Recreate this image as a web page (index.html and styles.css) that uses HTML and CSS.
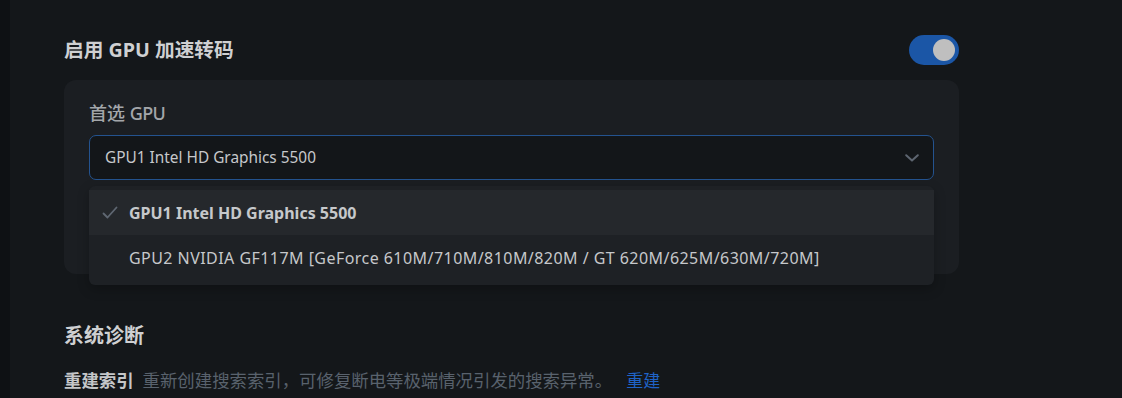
FILE: index.html
```html
<!DOCTYPE html>
<html lang="zh-CN">
<head>
<meta charset="utf-8">
<link rel="stylesheet" href="styles.css">
</head>
<body>
<div class="layout">
  <div class="rail"></div>
  <main class="main">
    <div class="setting-head">
      <h2 class="title">启用 GPU 加速转码</h2>
      <div class="toggle"><span class="knob"></span></div>
    </div>
    <div class="card">
      <div class="field-label">首选 <span class="latin">GPU</span></div>
      <div class="select-wrap">
        <div class="select">
          <span class="select-value">GPU1 Intel HD Graphics 5500</span>
          <svg class="chevron" width="14" height="8" viewBox="0 0 14 8"><path d="M1.2 1.2 L7 6.6 L12.8 1.2" fill="none" stroke="#5d6570" stroke-width="2" stroke-linecap="round" stroke-linejoin="round"/></svg>
        </div>
        <ul class="menu">
          <li class="option selected">
            <svg class="check" width="16" height="14" viewBox="0 0 16 14"><path d="M1.5 7.5 L5.5 11.5 L14.5 1.5" fill="none" stroke="#5f6772" stroke-width="1.8" stroke-linecap="round" stroke-linejoin="round"/></svg>
            <span>GPU1 Intel HD Graphics 5500</span>
          </li>
          <li class="option wide">
            <span>GPU2 NVIDIA GF117M [GeForce 610M/710M/810M/820M / GT 620M/625M/630M/720M]</span>
          </li>
        </ul>
      </div>
    </div>
    <h3 class="section-title">系统诊断</h3>
    <div class="diag-row">
      <span class="diag-name">重建索引</span>
      <span class="diag-desc">重新创建搜索索引，可修复断电等极端情况引发的搜索异常。</span>
      <a class="diag-link">重建</a>
    </div>
  </main>
</div>
</body>
</html>
```

FILE: styles.css
```css
html, body {
  margin: 0;
  padding: 0;
  height: 100%;
  background: #14171a;
  font-family: "Noto Sans", "Noto Sans CJK SC", sans-serif;
  overflow: hidden;
}
.layout {
  display: flex;
  height: 398px;
}
.rail {
  width: 10px;
  flex: none;
  background: #0e1114;
}
.main {
  flex: none;
  width: 895px;
  padding: 35px 0 0 54px;
}
.setting-head {
  display: flex;
  align-items: center;
  justify-content: space-between;
  height: 30px;
}
.title {
  margin: 0;
  font-size: 19.7px;
  font-weight: 700;
  color: #cfd0d2;
  line-height: 30px;
}
.toggle {
  width: 50px;
  height: 30px;
  border-radius: 15px;
  background: #1b56a6;
  display: flex;
  align-items: center;
  justify-content: flex-end;
  padding-right: 4px;
  box-sizing: border-box;
}
.knob {
  width: 22px;
  height: 22px;
  border-radius: 50%;
  background: #bfbfbf;
}
.card {
  margin-top: 15px;
  background: #1b1e22;
  border-radius: 12px;
  padding: 21px 25px 94px;
}
.field-label {
  font-size: 18px;
  line-height: 24px;
  color: #a3a6aa;
  font-weight: 500;
  margin-bottom: 10px;
}
.latin {
  letter-spacing: -0.6px;
}
.select-wrap {
  position: relative;
}
.select {
  height: 45px;
  box-sizing: border-box;
  border: 1px solid #24538f;
  border-radius: 7px;
  background: #131619;
  display: flex;
  align-items: center;
  justify-content: space-between;
  padding: 0 14px 0 15px;
}
.select-value {
  font-size: 15.4px;
  color: #c6c8cb;
}
.chevron {
  display: block;
}
.menu {
  position: absolute;
  left: 0;
  right: 0;
  top: 51px;
  margin: 0;
  padding: 4px 0 5px;
  list-style: none;
  background: #1e2125;
  border-radius: 6px;
  box-shadow: 0 4px 12px rgba(0,0,0,0.25);
}
.option {
  height: 45px;
  display: flex;
  align-items: center;
  padding-left: 40px;
  position: relative;
  font-size: 16px;
  color: #c6c8cb;
}
.option.wide {
  letter-spacing: 0.45px;
}
.option.selected {
  background: #25282c;
  font-weight: 700;
}
.check {
  position: absolute;
  left: 13px;
  top: 16px;
}
.section-title {
  margin: 48px 0 0;
  font-size: 20px;
  font-weight: 700;
  color: #cfd0d2;
  line-height: 28px;
}
.diag-row {
  margin-top: 18px;
  display: flex;
  align-items: baseline;
  font-size: 17px;
  line-height: 24px;
}
.diag-name {
  font-weight: 700;
  font-size: 17.4px;
  color: #c4c6c8;
  margin-right: 9px;
}
.diag-desc {
  font-size: 17.4px;
  color: #59626d;
}
.diag-link {
  color: #1f63c7;
  margin-left: 14px;
}
```
